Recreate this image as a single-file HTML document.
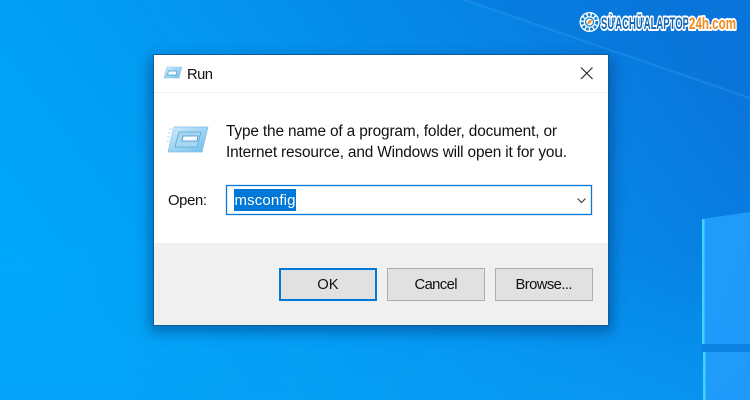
<!DOCTYPE html>
<html><head><meta charset="utf-8"><style>
html,body{margin:0;padding:0;width:750px;height:400px;overflow:hidden;background:#0a8ee8}
svg{display:block;font-family:"Liberation Sans",sans-serif}
</style></head><body>
<svg width="750" height="400" viewBox="0 0 750 400" xmlns="http://www.w3.org/2000/svg">
<defs>
<linearGradient id="bg" x1="0" y1="0.6" x2="1" y2="0.2">
<stop offset="0" stop-color="#00a8fb"/><stop offset="0.3" stop-color="#029cf3"/><stop offset="0.7" stop-color="#0686e8"/><stop offset="1" stop-color="#0a74da"/>
</linearGradient>
<linearGradient id="bot" x1="0" y1="0" x2="0" y2="1">
<stop offset="0" stop-color="#0aa0f5" stop-opacity="0"/><stop offset="1" stop-color="#0a9ff5" stop-opacity=".5"/>
</linearGradient>
<linearGradient id="pane" x1="0" y1="0" x2="1" y2="1">
<stop offset="0" stop-color="#1f9dfa"/><stop offset="1" stop-color="#2099fa"/>
</linearGradient>
<linearGradient id="ic" x1="0" y1="0" x2="1" y2="1">
<stop offset="0" stop-color="#d3ebfa"/><stop offset="1" stop-color="#6fbdea"/>
</linearGradient>
<filter id="sh" x="-10%" y="-10%" width="120%" height="125%"><feGaussianBlur stdDeviation="7"/></filter>
<filter id="b1"><feGaussianBlur stdDeviation="0.6"/></filter>
<filter id="b2" x="-5%" y="-20%" width="110%" height="140%"><feGaussianBlur stdDeviation="0.3"/></filter>
</defs>
<rect width="750" height="400" fill="url(#bg)"/>
<rect y="250" width="750" height="150" fill="url(#bot)"/>
<path d="M465 0L750 98V0Z" fill="#0b74d8" opacity=".3"/>
<path d="M465 0L750 98" stroke="#3aa6f0" stroke-width="1.500" opacity=".45" filter="url(#b1)" fill="none"/>
<path d="M702 219L750 212V344H702Z" fill="url(#pane)"/>
<path d="M703 352H750V400H703Z" fill="url(#pane)"/>
<rect x="702" y="219" width="2.500" height="125" fill="#3fd3fb"/>
<rect x="703" y="352" width="2.500" height="48" fill="#3fd3fb"/>
<rect x="702" y="344" width="48" height="8" fill="#0b82e2"/>

<rect x="150" y="58" width="462" height="274" fill="#003a78" opacity=".55" filter="url(#sh)"/>
<rect x="153.500" y="54.500" width="455" height="271" fill="#fff" stroke="#0b5f9e"/>
<rect x="154" y="243" width="454" height="82" fill="#f0f0f0"/>
<rect x="154" y="92" width="454" height="1" fill="#f2f2f2"/>

<g>
<path d="M167 67H182L179 78H164Z" fill="url(#ic)" stroke="#8cc6ea" stroke-width=".6"/>
<path d="M168.500 71H177L176 75H167.500Z" fill="#f4fbff" stroke="#4f9ecf" stroke-width=".7"/>
</g>
<text x="187" y="79" font-size="14.800" fill="#111" textLength="26" lengthAdjust="spacing">Run</text>
<path d="M581 67.500L592.500 79M592.500 67.500L581 79" stroke="#222" stroke-width="1.100" fill="none"/>

<g>
<path d="M174 127H208L202 152H168Z" fill="url(#ic)" stroke="#7fbfe6" stroke-width=".7"/>
<path d="M179 132H201L197 147H175Z" fill="#a8d6f2" stroke="#5aa8d8" stroke-width=".8"/>
<path d="M183 136H198L197 141H182Z" fill="#fafdff" stroke="#3f90c4" stroke-width=".8"/>
<path d="M169 129H174M168 133H173M167 137H172M166 141H171" stroke="#cfe8f8" stroke-width="1.200"/>
</g>

<text x="226" y="136" font-size="15.400" fill="#111" textLength="331" lengthAdjust="spacing">Type the name of a program, folder, document, or</text>
<text x="226" y="157" font-size="15.400" fill="#111" textLength="341" lengthAdjust="spacing">Internet resource, and Windows will open it for you.</text>
<text x="168" y="205" font-size="14.800" fill="#111" textLength="39" lengthAdjust="spacing">Open:</text>

<rect x="226.500" y="185.500" width="365" height="29" fill="#fff" stroke="#0a78d7" stroke-width="1.300"/>
<rect x="234" y="189" width="62" height="22" fill="#0078d7"/>
<text x="234.500" y="205" font-size="15" fill="#fff" textLength="61" lengthAdjust="spacing">msconfig</text>
<path d="M577.500 198.500L581.500 202.500L585.500 198.500" stroke="#444" stroke-width="1.200" fill="none"/>

<rect x="280" y="269" width="96" height="31" fill="#e1e1e1" stroke="#0078d7" stroke-width="2"/>
<rect x="387.500" y="268.500" width="97" height="32" fill="#e1e1e1" stroke="#adadad"/>
<rect x="495.500" y="268.500" width="97" height="32" fill="#e1e1e1" stroke="#adadad"/>
<text x="328" y="289" font-size="14.800" fill="#111" text-anchor="middle">OK</text>
<text x="436" y="289" font-size="14.800" fill="#111" text-anchor="middle" textLength="43" lengthAdjust="spacing">Cancel</text>
<text x="544" y="289" font-size="14.800" fill="#111" text-anchor="middle" textLength="57" lengthAdjust="spacing">Browse...</text>

<g filter="url(#b2)">
<circle cx="589.500" cy="22" r="10" fill="#fff"/>
<circle cx="589.500" cy="22" r="7.200" fill="none" stroke="#0a7fd0" stroke-width="3" stroke-dasharray="2.600 1.400"/>
<circle cx="589.500" cy="22" r="5.800" fill="#fff"/>
<circle cx="589.500" cy="22" r="4" fill="none" stroke="#0a7fd0" stroke-width="1.200"/>
<path d="M592.500 19L590.500 23L586.500 25L588.500 21Z" fill="#f08a1e"/>
<g font-weight="bold" font-size="16.500" stroke-linejoin="round" style="paint-order:stroke">
<text x="601" y="29" fill="#0a66b8" stroke="#fff" stroke-width="4" textLength="88" lengthAdjust="spacingAndGlyphs">SỬACHỮALAPTOP</text>
<text x="689" y="29" fill="#f08a1e" stroke="#fff" stroke-width="4" textLength="47" lengthAdjust="spacingAndGlyphs">24h.com</text>
</g>
</g>
</svg>
</body></html>
